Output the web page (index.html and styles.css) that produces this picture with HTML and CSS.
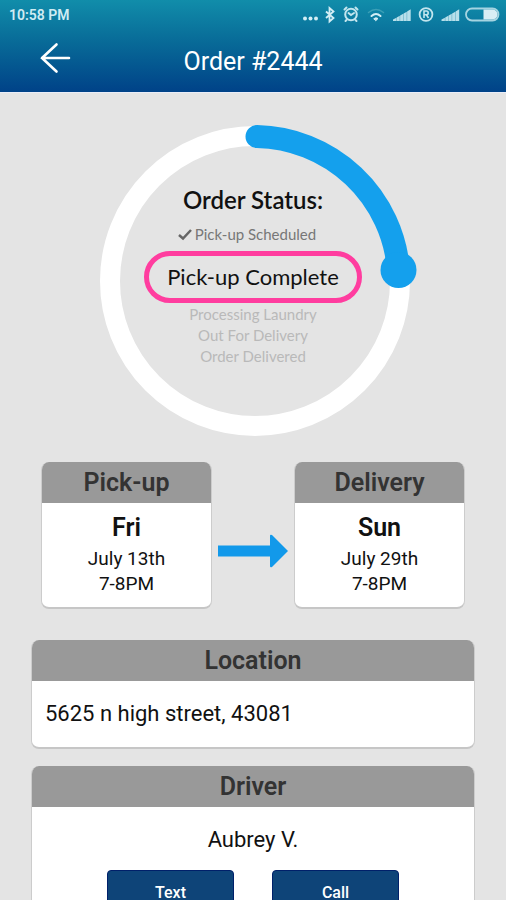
FILE: index.html
```html
<!DOCTYPE html>
<html lang="en">
<head>
<meta charset="utf-8">
<meta name="viewport" content="width=device-width, initial-scale=1">
<title>Order #2444</title>
<link rel="stylesheet" href="styles.css">
</head>
<body>
<header class="top">
  <div class="status-bar">
    <span class="clock">10:58 PM</span>
    <svg class="status-icons" width="200" height="20" viewBox="0 0 200 20" aria-hidden="true">
      <g fill="#d3eef5">
        <circle cx="3" cy="13.500" r="2"/><circle cx="8.500" cy="13.500" r="2"/><circle cx="14" cy="13.500" r="2"/>
      </g>
      <path d="M24 6.500l7.500 6.500-4 3.500V3l4 3.500-7.500 6.500" fill="none" stroke="#d3eef5" stroke-width="1.800"/>
      <g fill="none" stroke="#c2e5ee" stroke-width="2" stroke-linecap="round">
        <circle cx="49" cy="9.500" r="5.800"/>
        <path d="M46.500 8l2.500 2 3-2M42.500 4.500l2-2M55.500 4.500l-2-2M44.500 15l-1 1M53.500 15l1 1"/>
      </g>
      <g fill="none" stroke-linecap="round">
        <path d="M66.500 7.500q7.500-6 15 0" stroke="#3b9fb6" stroke-width="1.500"/>
        <path d="M69.500 11q4.500-4 9 0" stroke="#d3eef5" stroke-width="2"/>
        <path d="M72 13.500q2-1.600 4 0L74 15.500z" fill="#d3eef5" stroke="#d3eef5"/>
      </g>
      <path id="bars" fill="#b7dfea" d="M91 16v-1.500l3.400-1.800V16zM94.700 16v-3.600l3.100-1.700V16zM98.100 16v-5.600l3.200-1.700V16zM101.600 16V8.400l3.200-1.700V16zM105.100 16V6.400l3.600-2.200V16z"/>
      <circle cx="124" cy="9.500" r="6.400" fill="none" stroke="#c2e5ee" stroke-width="1.800"/>
      <path d="M122 13V6h2.300a1.900 1.900 0 0 1 0 3.800H122M124.500 10l2 3" fill="none" stroke="#c2e5ee" stroke-width="1.600"/>
      <use href="#bars" x="48.500"/>
      <rect x="164" y="3.500" width="32.500" height="12" rx="6" fill="none" stroke="#a5d4e1" stroke-width="1.800"/>
      <path d="M181.500 4.500h9a5 5 0 0 1 0 10h-9z" fill="#d9eef5"/>
    </svg>
  </div>
  <nav class="nav">
    <button class="back" type="button" aria-label="Back">
      <svg width="32" height="32" viewBox="0 0 32 32" aria-hidden="true">
        <path d="M16.500 2.500L2 16l14.500 13.500M2 16h27" fill="none" stroke="#fff" stroke-width="2.600" stroke-linecap="round"/>
      </svg>
    </button>
    <h1 class="title">Order #2444</h1>
  </nav>
</header>
<main class="content">
  <section class="progress">
    <svg class="ring" viewBox="0 0 320 320" aria-hidden="true">
      <circle cx="160" cy="160" r="145" fill="none" stroke="#fff" stroke-width="20"/>
      <path d="M162 15.500A145 145 0 0 1 303.500 149" fill="none" stroke="#14a0ed" stroke-width="23" stroke-linecap="round"/>
      <circle cx="303.500" cy="149" r="18" fill="#14a0ed"/>
    </svg>
    <div class="steps">
      <h2 class="steps-title">Order Status:</h2>
      <p class="step done">
        <svg width="14" height="12" viewBox="0 0 14 12" aria-hidden="true"><path d="M1 6l4 3.500L13 1" fill="none" stroke="#666" stroke-width="2.500"/></svg>
        Pick-up Scheduled
      </p>
      <p class="current">Pick-up Complete</p>
      <p class="step">Processing Laundry</p>
      <p class="step">Out For Delivery</p>
      <p class="step">Order Delivered</p>
    </div>
  </section>
  <div class="schedule">
    <section class="card slot">
      <h2 class="card-title">Pick-up</h2>
      <div class="slot-body">
        <strong class="day">Fri</strong>
        <span>July 13th</span>
        <span>7-8PM</span>
      </div>
    </section>
    <svg class="arrow" width="70" height="34" viewBox="0 0 70 34" aria-hidden="true">
      <path d="M0 11.500h52V2q0-2 2-1l16 16-16 16q-2 1-2-1v-9.500H0z" fill="#1299ea"/>
    </svg>
    <section class="card slot">
      <h2 class="card-title">Delivery</h2>
      <div class="slot-body">
        <strong class="day">Sun</strong>
        <span>July 29th</span>
        <span>7-8PM</span>
      </div>
    </section>
  </div>
  <section class="card">
    <h2 class="card-title">Location</h2>
    <p class="address">5625 n high street, 43081</p>
  </section>
  <section class="card driver">
    <h2 class="card-title">Driver</h2>
    <p class="name">Aubrey V.</p>
    <div class="actions">
      <button class="action" type="button">Text</button>
      <button class="action" type="button">Call</button>
    </div>
  </section>
</main>
</body>
</html>
```
FILE: styles.css
```css
* {
  box-sizing: border-box;
}

body {
  margin: 0;
  height: 100vh;
  display: flex;
  flex-direction: column;
  background: #e4e4e4;
  color: #111;
  font-family: Roboto, "Liberation Sans", sans-serif;
}

h1, h2, p {
  margin: 0;
}

.top {
  flex: none;
  background: linear-gradient(#118daa, #086b98 45%, #004288);
  border-bottom: 1px solid #e9edf8;
}

.status-bar {
  display: flex;
  align-items: center;
  justify-content: space-between;
  height: 30px;
  padding: 0 4px 0 9px;
}

.clock {
  color: #cfecf3;
  font-size: 14px;
  font-weight: 600;
}

.nav {
  display: grid;
  grid-template-columns: 80px 1fr 80px;
  align-items: center;
  height: 62px;
}

.back {
  display: flex;
  justify-self: end;
  padding: 0 8px 6px 0;
  border: 0;
  background: none;
}

.title {
  color: #fff;
  font-size: 25px;
  font-weight: 400;
  text-align: center;
}

.content {
  flex: 1;
  min-height: 0;
  padding: 28px 31px;
  overflow-y: auto;
  scrollbar-width: none;
}

.progress {
  display: grid;
  justify-items: center;
  align-items: start;
}

.ring,
.steps {
  grid-area: 1 / 1;
}

.ring {
  width: 320px;
  margin-left: 4px;
  overflow: visible;
}

.steps {
  display: flex;
  flex-direction: column;
  align-items: center;
  padding-top: 64px;
  font-family: Lato, "Liberation Sans", sans-serif;
  text-align: center;
}

.steps-title {
  font-size: 24px;
  font-weight: 600;
  line-height: 30px;
}

.step {
  color: #b9b9b9;
  font-size: 15px;
  line-height: 21px;
}

.done {
  display: flex;
  align-items: center;
  gap: 3px;
  margin: 9px 0 6px;
  padding-right: 12px;
  color: #777;
}

.current {
  width: 218px;
  margin-bottom: 1px;
  border: 5px solid #ff3d9f;
  border-radius: 26px;
  font-size: 22px;
  line-height: 42px;
}

.schedule {
  display: flex;
  align-items: center;
  justify-content: space-between;
  margin: 21px 10px 31px;
}

.card {
  overflow: hidden;
  border: 1px solid #ccc;
  border-top: 0;
  border-bottom: 2px solid #c6c6c6;
  border-radius: 8px;
  background: #fff;
}

.slot {
  flex: 0 1 171px;
}

.card-title {
  background: #999;
  color: #333;
  font-size: 25px;
  font-weight: 600;
  line-height: 41px;
  text-align: center;
}

.slot-body {
  display: flex;
  flex-direction: column;
  align-items: center;
  padding: 9px 0 11px;
  font-size: 19px;
  line-height: 25px;
}

.day {
  margin-bottom: 3px;
  font-size: 25px;
  font-weight: 600;
  line-height: 31px;
}

.arrow {
  flex: none;
  margin-top: 30px;
}

.address {
  padding: 0 13px;
  font-size: 22px;
  line-height: 66px;
}

.driver {
  margin-top: 17px;
}

.name {
  padding-top: 17px;
  font-size: 22px;
  line-height: 32px;
  text-align: center;
}

.actions {
  display: flex;
  justify-content: center;
  gap: 38px;
  padding: 14px 0 20px;
}

.action {
  width: 127px;
  height: 45px;
  border: 1px solid #00206a;
  border-radius: 4px;
  background: #0e4478;
  color: #fff;
  font: 500 16px Roboto, sans-serif;
}
```
